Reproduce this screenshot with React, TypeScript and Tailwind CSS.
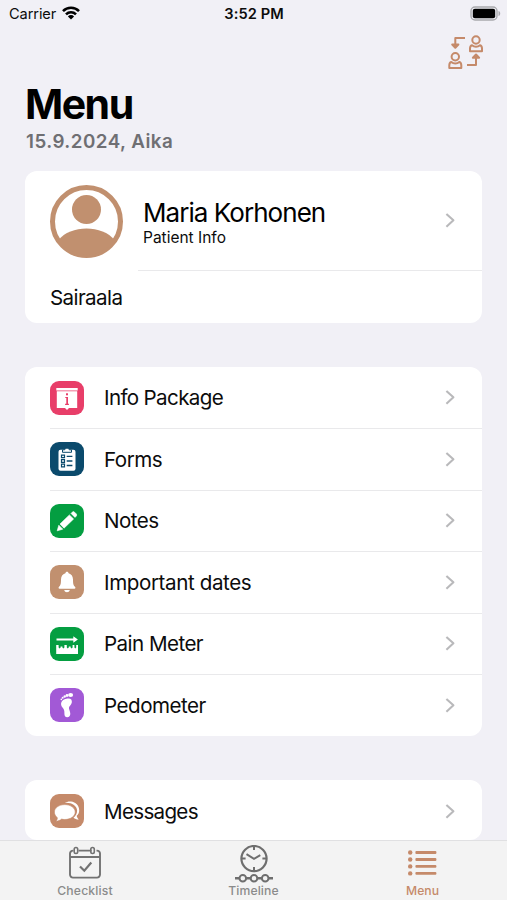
import type { ReactNode } from "react";

const Chevron = () => (
    <svg className="w-[10px] h-[17px] shrink-0" viewBox="0 0 10 17" fill="none" stroke="#b9b9bb" strokeWidth="2.1" strokeLinejoin="round">
        <path d="M1.4 1.9 L8.4 8.3 L1.4 14.7" />
    </svg>
)

const InfoIcon = () => (
    <svg viewBox="0 0 34 34" className="w-full h-full">
        <path fill="#fff" d="M6.3 7h21.400v2.600H6.300zM6.800 10.200h20.400V27h-8.200L17 29l-2-2H6.800z" />
        <g fill="#e83e69">
            <rect x="16" y="12.300" width="2" height="2" />
            <path d="M15.300 15.900H18v6.900h.9V24h-3.800v-1.200h1.200v-5.700h-1z" />
        </g>
    </svg>
)

const FormsIcon = () => (
    <svg viewBox="0 0 34 34" className="w-full h-full">
        <rect x="8.5" y="7.8" width="17" height="21" rx="2" fill="#fff" />
        <path d="M12.5 10.3V7.8h2.2a2.4 2.4 0 0 1 4.6 0h2.2v2.5z" fill="#fff" stroke="#0b4a6c" strokeWidth="1" />
        <g fill="none" stroke="#0b4a6c" strokeWidth="1.2">
            <path d="M11.5 13.1h3v2.6h-3zM11.5 17.7h3v2.6h-3zM11.5 22.2h3v2.6h-3z" />
            <path d="M16.7 14.4h5.7M16.7 19h5.7M16.7 23.5h5.7" strokeWidth="1.4" />
        </g>
    </svg>
)

const NotesIcon = () => (
    <svg viewBox="0 0 34 34" className="w-full h-full" fill="#fff" stroke="#fff" strokeWidth=".6" strokeLinejoin="round">
        <path d="M7.200 26.800l1.600-5.600 4 4zM10 20l9.400-9.100 4.200 4.100-9.600 9.200zM21 9.400l1.200-1.200a1.700 1.700 0 0 1 2.400 0l1.600 1.600a1.700 1.700 0 0 1 0 2.400L25 13.400z" />
    </svg>
)

const BellIcon = () => (
    <svg viewBox="0 0 34 34" className="w-full h-full" fill="#fff">
        <path d="M17 6.7c.9 0 1.500.7 1.600 1.500 3 .9 4.400 3.300 4.400 6.200 0 4.500.5 6 2 7.300.8.8.5 2-.5 2h-15c-1 0-1.300-1.200-.5-2 1.500-1.300 2-2.800 2-7.300 0-2.900 1.400-5.300 4.400-6.200.1-.8.7-1.500 1.600-1.500zM14.200 25h5.600c-.4 1.500-1.400 2.200-2.800 2.200s-2.400-.7-2.800-2.200z" />
    </svg>
)

const PainIcon = () => (
    <svg viewBox="0 0 34 34" className="w-full h-full" fill="#fff">
        <path d="M6.500 11.500h16.800V9.200l4.600 3.300-4.600 3.300v-2.300H6.500z" />
        <path d="M6.200 18h2.400v2.600l1 .9 1-.9v-1.200h1.800v1.200l1 .9 1-.9V18h2.400v2.600l1 .9 1-.9v-1.200h1.800v1.200l1 .9 1-.9V18h1.800v2.600l.9.9.9-.9V18H28v9H6.200z" />
    </svg>
)

const FootIcon = () => (
    <svg viewBox="0 0 34 34" className="w-full h-full" fill="#fff">
        <path d="M16.400 10.700c3.800-1 6 .6 5.400 3.900-.4 2.300-2.300 3.100-2.800 5-.4 1.800 1.300 3.600 1.300 6.200 0 2.200-1.200 3.500-3 3.500-2.100 0-3-1.600-2.900-4 .1-2.800-.4-4-1.900-5.800-2.900-3.500-1.300-7.800 3.900-8.800z" />
        <ellipse cx="20.600" cy="7" rx="2.500" ry="2.100" />
        <circle cx="17" cy="7.500" r="1.400" />
        <circle cx="14.700" cy="8.500" r="1.200" />
        <circle cx="12.700" cy="9.800" r="1" />
        <circle cx="11.300" cy="11.400" r=".8" />
    </svg>
)

const MessagesIcon = () => (
    <svg viewBox="0 0 34 34" className="w-full h-full" fill="#fff">
        <path d="M14.600 8.900c2-1 4.200-1.600 6.400-1.300 4.600.6 8.200 4.100 8.200 8.600 0 2.300-.9 4.200-2.500 5.600.3 1.600 1 2.800 2.100 3.700-1.900.1-3.800-.6-5.300-1.800 2.300-1.700 3.600-4.100 3.600-6.900 0-4.900-5.500-8.500-12.500-7.900z" />
        <path d="M14.800 10.600c5.900 0 10.400 3.400 10.400 7.500s-4.500 7.400-10.400 7.400c-1.100 0-2.200-.1-3.200-.4-1.500 1.300-3.600 2.100-5.600 2.100.8-.8 1.300-2 1.400-3.500-1.900-1.400-3-3.400-3-5.600 0-4.100 4.500-7.500 10.400-7.500z" stroke="#c58a6a" strokeWidth=".6" />
    </svg>
)

const SwitchIcon = () => (
    <svg className="w-[36px] h-[36px]" viewBox="0 0 36 36" fill="none" stroke="#c58a6a" strokeWidth="2" strokeLinejoin="round">
        <circle cx="28" cy="5" r="3.7" />
        <path d="M24 10.2c-1.4.5-2 1.6-2 3.2v2.8h12v-2.8c0-1.600-.6-2.700-2-3.200-1.100 1-2.400 1.500-4 1.500s-2.900-.5-4-1.500z" />
        <circle cx="7.3" cy="21.7" r="3.7" />
        <path d="M3.3 27c-1.4.5-2 1.6-2 3.2V33h12v-2.8c0-1.600-.6-2.700-2-3.200-1.100 1-2.400 1.500-4 1.500s-2.900-.5-4-1.500z" />
        <path d="M17 3H7.3v8.5M19 30h9v-8.5" />
        <path d="M4.2 9.500h6.200l-3.100 3.300zM24.900 22.800h6.200L28 19.500z" fill="#c58a6a" />
    </svg>
)

const ChecklistIcon = () => (
    <svg className="w-[34px] h-[34px]" viewBox="0 0 34 34" fill="none" stroke="#727272" strokeWidth="1.9">
        <path d="M5.5 4.6H5a3 3 0 0 0-3 3v21a3 3 0 0 0 3 3h24a3 3 0 0 0 3-3v-21a3 3 0 0 0-3-3h-.5M10.5 4.6h13M2 11h30" />
        <rect x="6.2" y="1.5" width="3.5" height="6" rx="1.7" strokeWidth="1.6" />
        <rect x="22.8" y="1.5" width="3.5" height="6" rx="1.7" strokeWidth="1.6" />
        <path d="M12 20.5l4.3 4.2 7-8.2" strokeWidth="2.2" />
    </svg>
)

const TimelineIcon = () => (
    <svg className="w-[40px] h-[38px]" viewBox="0 0 40 38" fill="none" stroke="#6e6e6e" strokeWidth="2">
        <circle cx="20" cy="13.6" r="12.6" strokeWidth="2.2" />
        <path d="M20 1.5v3.6M20 22v3.6M8 13.6h3.6M28.4 13.6H32M12.5 9.2l7.5 4.6 6.3-3.6" />
        <path d="M1 33.2h4.5M12 33.2h4.5M23.5 33.2H28M34.5 33.2H39" strokeWidth="2.4" />
        <circle cx="8.8" cy="33.2" r="3.3" />
        <circle cx="20" cy="33.2" r="3.3" />
        <circle cx="31.2" cy="33.2" r="3.3" />
    </svg>
)

const MenuIcon = () => (
    <svg className="w-[29px] h-[26px]" viewBox="0 0 29 26" fill="#c58a6a">
        {[2.5, 9.5, 16.4, 23.4].map((y) => (
            <g key={y}>
                <circle cx="2.2" cy={y} r="2.2" />
                <rect x="7.4" y={y - 1.4} width="21" height="2.8" rx="1" />
            </g>
        ))}
    </svg>
)

const items = [
    { label: "Info Package", bg: "bg-[#e83e69]", icon: <InfoIcon />, tracking: "tracking-[-0.65px]" },
    { label: "Forms", bg: "bg-[#0b4a6c]", icon: <FormsIcon />, tracking: "tracking-[-0.5px]" },
    { label: "Notes", bg: "bg-[#049e41]", icon: <NotesIcon />, tracking: "tracking-[-0.55px]" },
    { label: "Important dates", bg: "bg-[#c1906f]", icon: <BellIcon />, tracking: "tracking-[-0.4px]" },
    { label: "Pain Meter", bg: "bg-[#049e41]", icon: <PainIcon />, tracking: "tracking-[-0.55px]" },
    { label: "Pedometer", bg: "bg-[#a259d6]", icon: <FootIcon />, tracking: "tracking-[-0.5px]" },
]

interface RowProps {
    label: string
    bg: string
    icon: ReactNode
    tracking: string
    last?: boolean
}

const MenuRow = ({ label, bg, icon, tracking, last }: RowProps) => (
    <div className="pl-[25px]">
        <div className={`flex items-center h-[61.5px] pr-[27px] border-b ${last ? 'border-transparent' : 'border-[#e9e9eb]'}`}>
            <div className={`w-[34px] h-[34px] rounded-[9px] overflow-hidden shrink-0 ${bg}`}>{icon}</div>
            <h2 className={`flex-1 pl-5 pt-px text-[20.6px] leading-6 ${tracking}`}>{label}</h2>
            <Chevron />
        </div>
    </div>
)

const StatusBar = () => (
    <div className="grid grid-cols-3 items-center h-[27px] pl-[9px] pr-[6px] text-[14.6px]">
        <div className="flex items-center gap-[6px] pt-[2px]">
            <span className="tracking-[-0.1px]">Carrier</span>
            <svg className="w-[18px] h-[14px] mb-[2px]" viewBox="0 0 18 14" fill="none" stroke="#000" strokeWidth="2.6">
                <path d="M1 5.1a11.3 11.3 0 0 1 16 0M4 8.3a7.1 7.1 0 0 1 10 0" />
                <path d="M9 13.6l-3.1-3.2a4.4 4.4 0 0 1 6.2 0z" fill="#000" stroke="none" />
            </svg>
        </div>
        <span className="text-center font-semibold pt-[2px] pr-[2px] tracking-[0.1px]">3:52 PM</span>
        <div className="flex justify-end">
            <svg className="w-[31px] h-[15px]" viewBox="0 0 31 15">
                <rect x="1" y="1" width="26" height="13" rx="4" fill="none" stroke="#a9a9ad" strokeWidth="1.4" />
                <rect x="2.8" y="2.8" width="22.4" height="9.4" rx="2" />
                <path d="M28.5 5c2.3.6 2.3 4.4 0 5z" fill="#a9a9ad" />
            </svg>
        </div>
    </div>
)

const App = () => {
    return (
        <div className="w-[507px] h-[900px] flex flex-col overflow-hidden bg-[#f1f0f6] text-[#0c0c0c] font-['Inter',sans-serif]">
            <StatusBar />

            <div className="flex justify-end pr-[23px] pt-2">
                <SwitchIcon />
            </div>

            <div className="px-[25px] flex-1 min-h-0 overflow-hidden">
                <h1 className="mt-2 h-[51px] text-[41px] leading-[50px] font-bold text-black tracking-[-1.5px]">Menu</h1>
                <p className="h-[22px] pl-px text-[18.8px] leading-[23px] font-semibold text-[#6f6f73] tracking-[0.45px]">15.9.2024, Aika</p>

                {/* Patient */}
                <div className="mt-[19px] h-[152px] bg-white rounded-[12px]">
                    <div className="flex h-[100px]">
                        <div className="pl-[25px] pt-[13.5px] w-[113px] shrink-0">
                            <svg className="w-[73px] h-[73px]" viewBox="0 0 73 73">
                                <circle cx="36.5" cy="36.5" r="34" fill="none" stroke="#c1906f" strokeWidth="5" />
                                <circle cx="36.5" cy="24.5" r="14.5" fill="#c1906f" />
                                <path d="M8.5 55C20 39.5 53 39.5 64.5 55A34 34 0 0 1 8.5 55z" fill="#c1906f" />
                            </svg>
                        </div>
                        <div className="flex-1 flex items-center justify-between pl-[5px] pr-[27px] border-b border-[#e9e9eb]">
                            <div className="pt-[4px]">
                                <h2 className="text-[26px] leading-[30px] text-black tracking-[-0.95px]">Maria Korhonen</h2>
                                <p className="text-[15.5px] leading-5">Patient Info</p>
                            </div>
                            <Chevron />
                        </div>
                    </div>
                    <div className="flex items-center h-[52px] pt-[2px] pl-[25px] text-[20.6px] tracking-[-0.6px]">Sairaala</div>
                </div>

                {/* Tools */}
                <div className="mt-[44px] pt-[0.5px] h-[369px] bg-white rounded-[12px]">
                    {items.map((item, i) => (
                        <MenuRow key={item.label} {...item} last={i === items.length - 1} />
                    ))}
                </div>

                <div className="mt-[44px] pt-px h-[60px] bg-white rounded-[12px]">
                    <MenuRow label="Messages" bg="bg-[#c58a6a]" icon={<MessagesIcon />} tracking="tracking-[-0.7px]" last />
                </div>
            </div>

            <nav className="grid grid-cols-3 h-[60px] shrink-0 bg-[#f3f3f3] border-t border-[#e0e0e2] text-[12.2px] leading-4 font-medium text-[#8b8b8b]">
                <div className="flex flex-col items-center">
                    <div className="h-[42px] pt-[5px]"><ChecklistIcon /></div>
                    <span className="tracking-[0.15px] pl-px">Checklist</span>
                </div>
                <div className="flex flex-col items-center">
                    <div className="h-[42px] pt-[4px]"><TimelineIcon /></div>
                    <span className="tracking-[0.1px]">Timeline</span>
                </div>
                <div className="flex flex-col items-center text-[#c58a6a]">
                    <div className="h-[42px] pt-[9px]"><MenuIcon /></div>
                    <span>Menu</span>
                </div>
            </nav>
        </div>
    )
}

export default App;
